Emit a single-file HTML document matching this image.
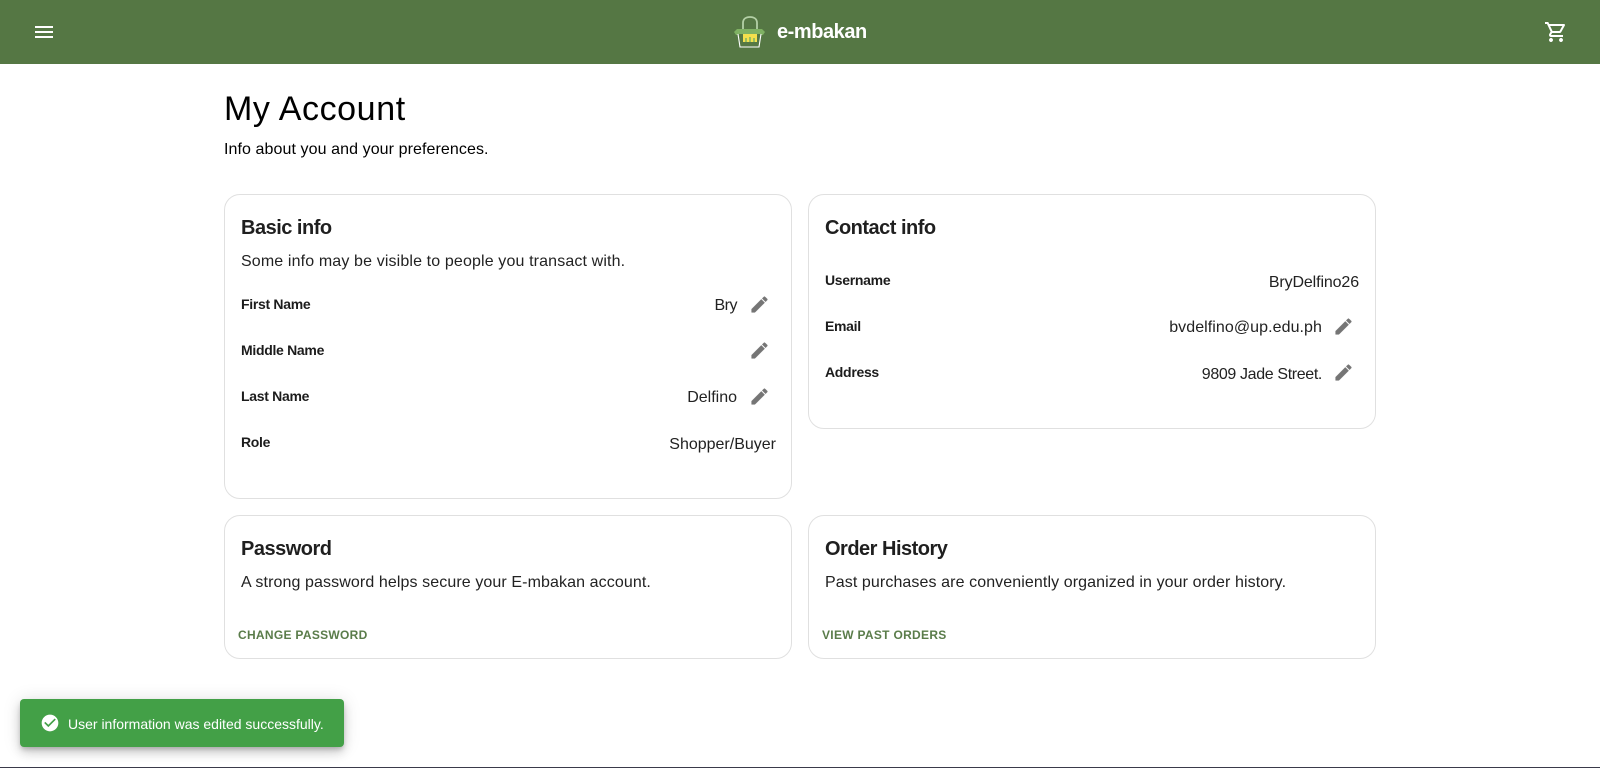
<!DOCTYPE html>
<html lang="en">
<head>
<meta charset="utf-8">
<title>My Account</title>
<style>
html,body{margin:0;padding:0;background:#fff;}
body{width:1600px;height:768px;position:relative;overflow:hidden;font-family:"Liberation Sans",sans-serif;color:rgba(0,0,0,.87);}
.a{position:absolute;white-space:nowrap;line-height:20px;}
.hdr{position:absolute;left:0;top:0;width:1600px;height:64px;background:#557744;}
.card{position:absolute;box-sizing:border-box;background:#fff;border:1px solid #e0e0e0;border-radius:16px;width:568px;}
.t{font-size:20px;font-weight:700;letter-spacing:-.5px;left:241px;color:#1f1f1f;}
.s{font-size:16px;color:#222;letter-spacing:.11px;}
.l{font-size:14px;font-weight:700;color:#1c1c1c;letter-spacing:-.3px;}
.v{font-size:16px;color:#222;text-align:right;}
.b{font-size:12px;font-weight:700;color:#5a7c4a;letter-spacing:.3px;}
svg{position:absolute;display:block;}
.p{fill:#757575;stroke:#757575;stroke-width:.5;}
</style>
</head>
<body>
<div class="hdr"></div>
<svg style="left:32px;top:20px" width="24" height="24" viewBox="0 0 24 24" fill="#fff"><path d="M3 18h18v-2H3v2zm0-5h18v-2H3v2zm0-7v2h18V6H3z"/></svg>
<svg style="left:734px;top:16px" width="32" height="32" viewBox="0 0 32 32">
<path d="M9 14V7c0-4 3-6 7-6s7 2 7 6v7" fill="none" stroke="#b4d0a6" stroke-width="1.8"/>
<path d="M3 13h25l3 3-2 3H2l-2-3z" fill="#7fb163"/>
<path d="M4 18l2 13h19l2-13" fill="#557744" stroke="#fff" stroke-width="1.1"/>
<path d="M9 18h14v8H9z" fill="#f4e04d"/>
<path d="M11 26v-4h2v4zm4 0v-5h2v5zm4 0v-4h2v4z" fill="#9abf5c"/>
</svg>
<div class="a" style="left:777px;top:22px;font-size:20px;font-weight:700;color:#fff;letter-spacing:-.45px">e-mbakan</div>
<svg style="left:1544px;top:20px" width="24" height="24" viewBox="0 0 24 24" fill="#fff"><path d="M15.55 13c.75 0 1.41-.41 1.75-1.03l3.58-6.49c.37-.66-.11-1.48-.87-1.48H5.21l-.94-2H1v2h2l3.6 7.59-1.35 2.44C4.52 15.37 5.48 17 7 17h12v-2H7l1.1-2h7.45zM6.16 6h12.15l-2.76 5H8.53L6.16 6zM7 18c-1.1 0-1.99.9-1.99 2S5.9 22 7 22s2-.9 2-2-.9-2-2-2zm10 0c-1.1 0-1.99.9-1.99 2s.89 2 1.99 2 2-.9 2-2-.9-2-2-2z"/></svg>

<div class="a" style="left:224px;top:88px;font-size:34px;line-height:42px;color:#000;letter-spacing:.6px">My Account</div>
<div class="a s" style="left:224px;top:140px;color:#000;letter-spacing:.085px">Info about you and your preferences.</div>

<div class="card" style="left:224px;top:194px;height:305px"></div>
<div class="card" style="left:808px;top:194px;height:235px"></div>
<div class="card" style="left:224px;top:515px;height:144px"></div>
<div class="card" style="left:808px;top:515px;height:144px"></div>

<div class="a t" style="top:218px">Basic info</div>
<div class="a s" style="left:241px;top:252px;letter-spacing:.135px">Some info may be visible to people you transact with.</div>

<div class="a l" style="left:241px;top:294px">First Name</div>
<div class="a v" style="right:863px;top:296px;letter-spacing:-.5px">Bry</div>
<svg class="p" style="left:749px;top:293.5px" width="21" height="21" viewBox="0 0 24 24"><path d="M3 17.25V21h3.75L17.81 9.94l-3.75-3.75L3 17.25zM20.71 7.04c.39-.39.39-1.02 0-1.41l-2.34-2.34c-.39-.39-1.02-.39-1.41 0l-1.83 1.83 3.75 3.75 1.83-1.83z"/></svg>

<div class="a l" style="left:241px;top:340px">Middle Name</div>
<svg class="p" style="left:749px;top:339.5px" width="21" height="21" viewBox="0 0 24 24"><path d="M3 17.25V21h3.75L17.81 9.94l-3.75-3.75L3 17.25zM20.71 7.04c.39-.39.39-1.02 0-1.41l-2.34-2.34c-.39-.39-1.02-.39-1.41 0l-1.83 1.83 3.75 3.75 1.83-1.83z"/></svg>

<div class="a l" style="left:241px;top:386px">Last Name</div>
<div class="a v" style="right:863px;top:388px">Delfino</div>
<svg class="p" style="left:749px;top:385.5px" width="21" height="21" viewBox="0 0 24 24"><path d="M3 17.25V21h3.75L17.81 9.94l-3.75-3.75L3 17.25zM20.71 7.04c.39-.39.39-1.02 0-1.41l-2.34-2.34c-.39-.39-1.02-.39-1.41 0l-1.83 1.83 3.75 3.75 1.83-1.83z"/></svg>

<div class="a l" style="left:241px;top:432px">Role</div>
<div class="a v" style="right:824px;top:435px">Shopper/Buyer</div>

<div class="a t" style="left:825px;top:218px">Contact info</div>
<div class="a l" style="left:825px;top:270px">Username</div>
<div class="a v" style="right:241px;top:273px;letter-spacing:-.12px">BryDelfino26</div>
<div class="a l" style="left:825px;top:316px">Email</div>
<div class="a v" style="right:278px;top:318px;letter-spacing:.07px">bvdelfino@up.edu.ph</div>
<svg class="p" style="left:1333px;top:315.5px" width="21" height="21" viewBox="0 0 24 24"><path d="M3 17.25V21h3.75L17.81 9.94l-3.75-3.75L3 17.25zM20.71 7.04c.39-.39.39-1.02 0-1.41l-2.34-2.34c-.39-.39-1.02-.39-1.41 0l-1.83 1.83 3.75 3.75 1.83-1.83z"/></svg>
<div class="a l" style="left:825px;top:362px">Address</div>
<div class="a v" style="right:278px;top:365px;letter-spacing:-.36px">9809 Jade Street.</div>
<svg class="p" style="left:1333px;top:361.5px" width="21" height="21" viewBox="0 0 24 24"><path d="M3 17.25V21h3.75L17.81 9.94l-3.75-3.75L3 17.25zM20.71 7.04c.39-.39.39-1.02 0-1.41l-2.34-2.34c-.39-.39-1.02-.39-1.41 0l-1.83 1.83 3.75 3.75 1.83-1.83z"/></svg>

<div class="a t" style="top:539px">Password</div>
<div class="a s" style="left:241px;top:573px;letter-spacing:.1px">A strong password helps secure your E-mbakan account.</div>
<div class="a b" style="left:238px;top:625px">CHANGE PASSWORD</div>

<div class="a t" style="left:825px;top:539px">Order History</div>
<div class="a s" style="left:825px;top:573px;letter-spacing:.095px">Past purchases are conveniently organized in your order history.</div>
<div class="a b" style="left:822px;top:625px">VIEW PAST ORDERS</div>

<div style="position:absolute;left:20px;top:699px;width:324px;height:48px;background:#43a047;border-radius:4px;box-shadow:0 3px 5px -1px rgba(0,0,0,.2),0 6px 10px 0 rgba(0,0,0,.14),0 1px 18px 0 rgba(0,0,0,.12)"></div>
<svg style="left:40px;top:713px" width="20" height="20" viewBox="0 0 24 24" fill="#fff"><path d="M12 2C6.48 2 2 6.48 2 12s4.48 10 10 10 10-4.48 10-10S17.52 2 12 2zm-2 15-5-5 1.41-1.41L10 14.17l7.59-7.59L19 8l-9 9z"/></svg>
<div class="a" style="left:68px;top:714px;font-size:14px;color:#fff;">User information was edited successfully.</div>
<div style="position:absolute;left:0;top:767px;width:1600px;height:1px;background:#3a3a4a"></div>
</body>
</html>
